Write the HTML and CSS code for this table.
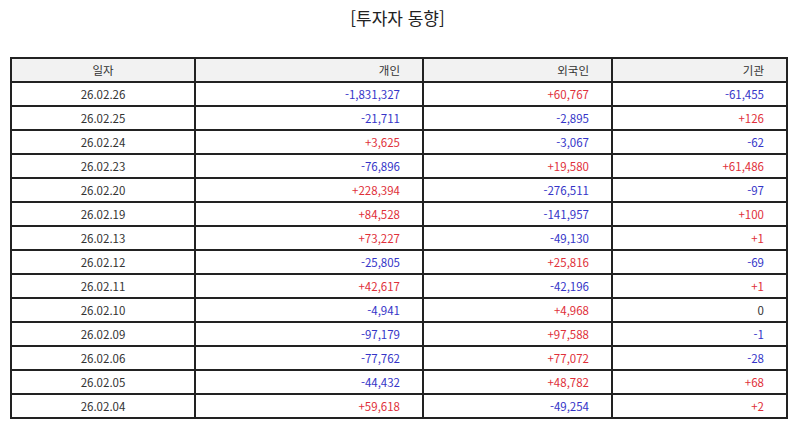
FILE: index.html
```html
<!DOCTYPE html>
<html lang="ko">
<head>
<meta charset="utf-8">
<link rel="stylesheet" href="styles.css">
</head>
<body>
<div class="page">
  <h1 class="title">[투자자 동향]</h1>
  <table class="grid">
    <colgroup>
      <col class="c1"><col class="c2"><col class="c3"><col class="c4">
    </colgroup>
    <thead>
      <tr><th class="date">일자</th><th>개인</th><th>외국인</th><th>기관</th></tr>
    </thead>
    <tbody>
      <tr><td class="date">26.02.26</td><td class="neg">-1,831,327</td><td class="pos">+60,767</td><td class="neg">-61,455</td></tr>
      <tr><td class="date">26.02.25</td><td class="neg">-21,711</td><td class="neg">-2,895</td><td class="pos">+126</td></tr>
      <tr><td class="date">26.02.24</td><td class="pos">+3,625</td><td class="neg">-3,067</td><td class="neg">-62</td></tr>
      <tr><td class="date">26.02.23</td><td class="neg">-76,896</td><td class="pos">+19,580</td><td class="pos">+61,486</td></tr>
      <tr><td class="date">26.02.20</td><td class="pos">+228,394</td><td class="neg">-276,511</td><td class="neg">-97</td></tr>
      <tr><td class="date">26.02.19</td><td class="pos">+84,528</td><td class="neg">-141,957</td><td class="pos">+100</td></tr>
      <tr><td class="date">26.02.13</td><td class="pos">+73,227</td><td class="neg">-49,130</td><td class="pos">+1</td></tr>
      <tr><td class="date">26.02.12</td><td class="neg">-25,805</td><td class="pos">+25,816</td><td class="neg">-69</td></tr>
      <tr><td class="date">26.02.11</td><td class="pos">+42,617</td><td class="neg">-42,196</td><td class="pos">+1</td></tr>
      <tr><td class="date">26.02.10</td><td class="neg">-4,941</td><td class="pos">+4,968</td><td class="zero">0</td></tr>
      <tr><td class="date">26.02.09</td><td class="neg">-97,179</td><td class="pos">+97,588</td><td class="neg">-1</td></tr>
      <tr><td class="date">26.02.06</td><td class="neg">-77,762</td><td class="pos">+77,072</td><td class="neg">-28</td></tr>
      <tr><td class="date">26.02.05</td><td class="neg">-44,432</td><td class="pos">+48,782</td><td class="pos">+68</td></tr>
      <tr><td class="date">26.02.04</td><td class="pos">+59,618</td><td class="neg">-49,254</td><td class="pos">+2</td></tr>
    </tbody>
  </table>
</div>
</body>
</html>
```
FILE: styles.css
```css
html, body {
  margin: 0;
  padding: 0;
  background: #ffffff;
}
.page {
  padding: 0 9px 0 10px;
  font-family: "Noto Sans CJK KR", "Noto Sans", sans-serif;
  color: #333333;
}
.title {
  margin: 0;
  padding-top: 5px;
  height: 57px;
  box-sizing: border-box;
  text-align: center;
  font-size: 17px;
  font-weight: normal;
  line-height: 26px;
  color: #222222;
}
.grid {
  width: 776px;
  border-collapse: collapse;
  table-layout: fixed;
  font-size: 11.5px;
}
.c1 { width: 184px; }
.c2 { width: 228px; }
.c3 { width: 189px; }
.c4 { width: 175px; }
.grid th,
.grid td {
  border: 2px solid #222222;
  height: 24px;
  padding: 0 22px 0 4px;
  text-align: right;
  font-weight: normal;
  line-height: 20px;
  box-sizing: border-box;
}
.grid th {
  background: #f2f2f2;
  color: #333333;
}
.grid .date {
  text-align: center;
  padding: 0 4px;
}
.neg { color: #3535c8; }
.pos { color: #e0303a; }
.zero { color: #333333; }
```
